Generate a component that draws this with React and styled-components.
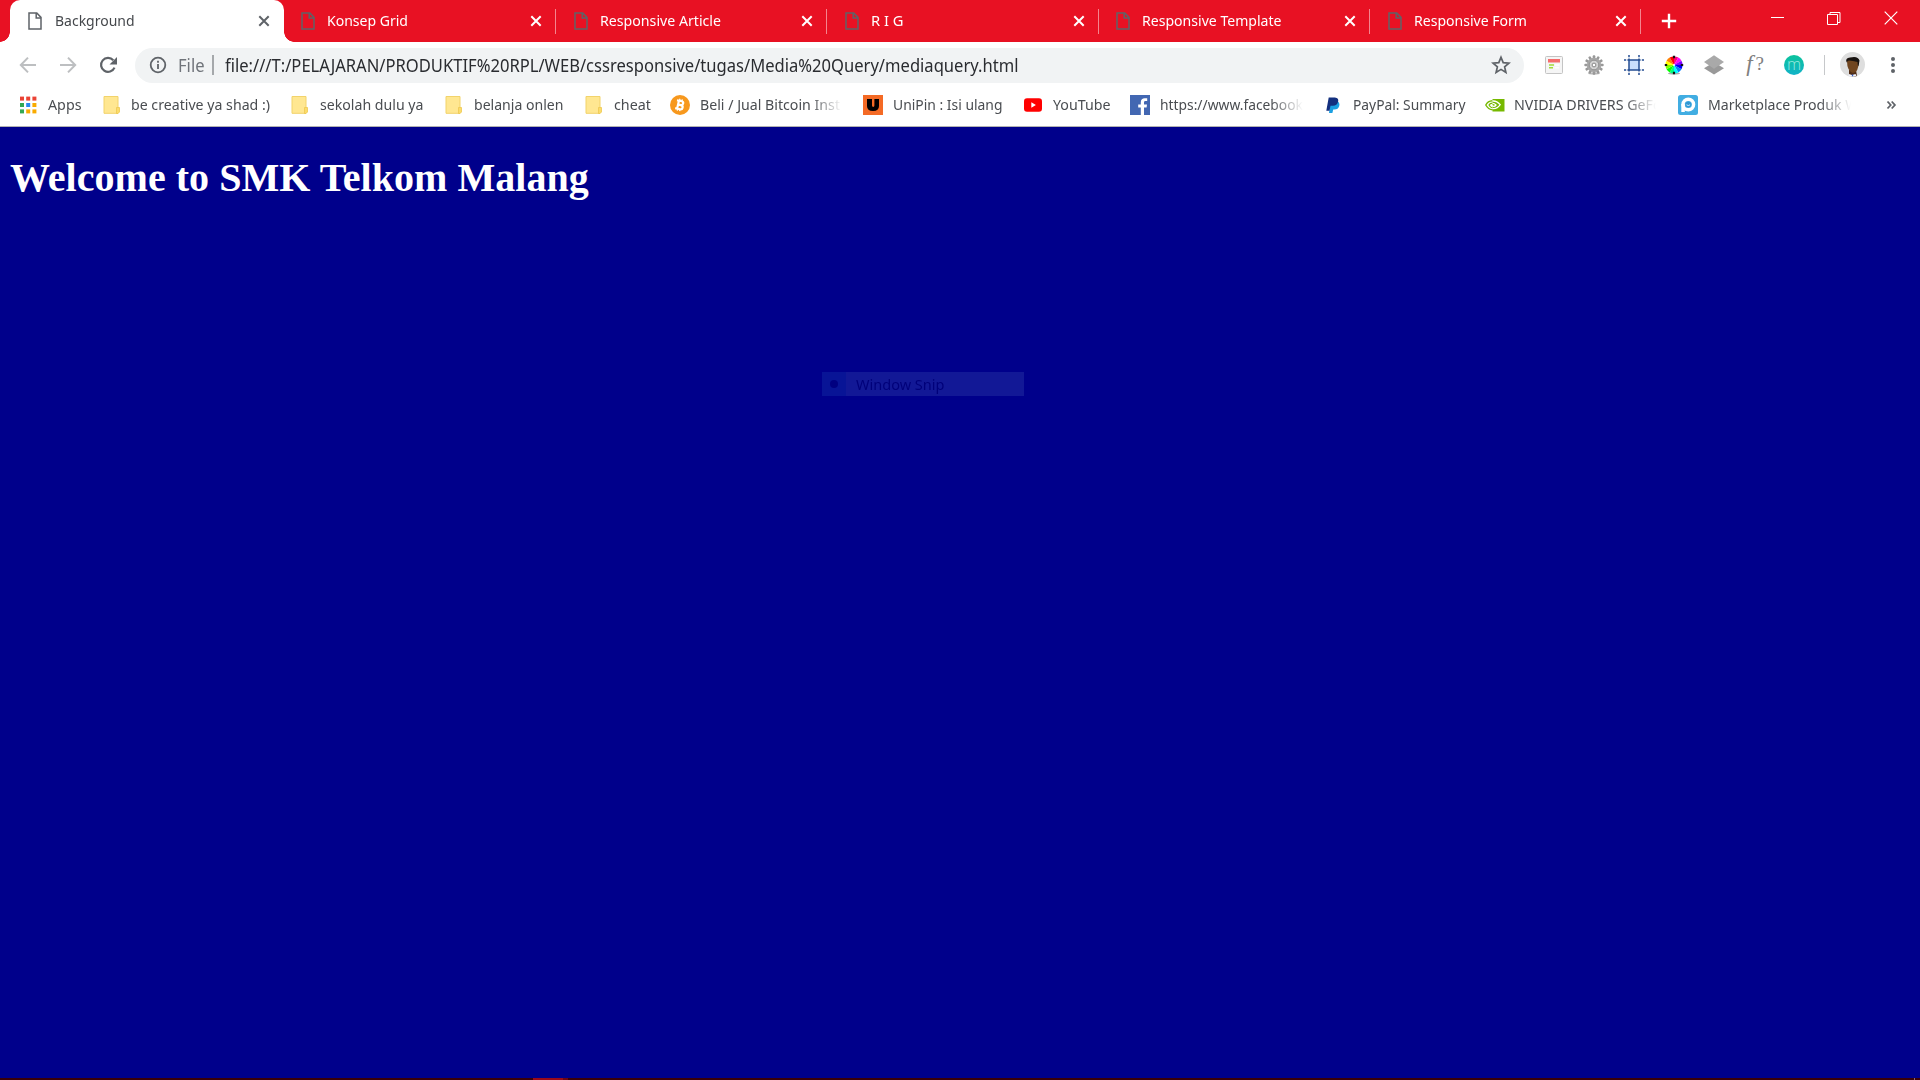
import React, { useLayoutEffect, useRef } from "react";
import styled, { createGlobalStyle } from "styled-components";

const Global = createGlobalStyle`
  html, body { margin: 0; padding: 0; background: #00008b; }
  body { overflow: hidden; font-family: "Noto Sans", "Open Sans", sans-serif; }
  * { box-sizing: border-box; }
`;

const Window = styled.div`
  width: 1920px; height: 1080px; display: flex; flex-direction: column; overflow: hidden;
`;

const FitBox = styled.span`
  display: block; flex: none; white-space: pre; line-height: ${p => p.$line || 20}px;
  font-size: ${p => p.$size || 15}px; color: ${p => p.$color || "inherit"};
  width: ${p => p.$box ? p.$box + "px" : "auto"};
  ${p => p.$fade && `mask-image: linear-gradient(to right, #000 calc(100% - 32px), transparent);`}
`;
const FitInner = styled.span`display: inline-block; transform-origin: 0 50%; vertical-align: top;`;

/* Condenses a label so that it takes the given width. */
function Fit({ text, width, tail = "", ...rest }) {
  const inner = useRef(null);
  const ref = useRef(null);
  useLayoutEffect(() => {
    inner.current.style.transform = "none";
    const natural = ref.current.getBoundingClientRect().width;
    inner.current.style.transform = `scaleX(${width / natural})`;
  }, [text, width]);
  return <FitBox {...rest}><FitInner ref={inner}><span ref={ref}>{text}</span>{tail}</FitInner></FitBox>;
}

/* ---------- tab strip ---------- */
const TabStrip = styled.div`
  height: 42px; flex: none; display: flex; background: #e81123; color: #fff; padding-left: 10px;
`;
const TabBox = styled.div`
  width: ${p => p.$w}px; flex: none; height: 42px; display: flex; align-items: center;
  position: relative; padding-left: ${p => p.$active ? 18 : 17.4}px;
  background: ${p => p.$active ? "#fff" : "transparent"};
  color: ${p => p.$active ? "#45484c" : "#fff"};
  border-radius: 10px 10px 0 0;
  ${p => p.$active && `
    &::before, &::after { content: ""; position: absolute; bottom: 0; width: 10px; height: 10px; }
    &::before { left: -10px; background: radial-gradient(circle at 0 0, transparent 9.5px, #fff 10px); }
    &::after { right: -10px; background: radial-gradient(circle at 100% 0, transparent 9.5px, #fff 10px); }
  `}
`;
const TabTitle = styled.div`flex: 1; padding-left: ${p => p.$active ? 12.5 : 12}px; padding-bottom: 3px;`;
const TabClose = styled.svg`width: 12px; height: 12px; margin-right: ${p => p.$r}px; flex: none;`;
const TabLine = styled.div`width: 1px; height: 25px; background: #f4858e; flex: none;`;
const NewTab = styled.svg`width: 16px; height: 16px; margin: 13px 0 0 19.5px; flex: none;`;
const Caption = styled.div`margin-left: auto; display: flex; padding: 11px 22px 0 0; gap: 43px;`;

const FilePath = () => (
  <svg width="14" height="18" viewBox="0 0 14 18" fill="none" stroke="#5f6368" strokeWidth="1.5">
    <path d="M1 1h7.8L13 5.4V17H1z" /><path d="M8.2 1v5H13" />
  </svg>
);

function Tab({ title, width, w, active }) {
  return (
    <TabBox $w={w} $active={active}>
      <FilePath />
      <TabTitle $active={active}><Fit text={title} width={width} /></TabTitle>
      <TabClose $r={active ? 14 : 13} viewBox="0 0 12 12" stroke={active ? "#5f6368" : "#fff"} strokeWidth="2">
        <path d="M1.3 1.3l9.4 9.4M10.7 1.3l-9.4 9.4" />
      </TabClose>
      {!active && <TabLine />}
    </TabBox>
  );
}

/* ---------- toolbar ---------- */
const Toolbar = styled.div`
  height: 45px; flex: none; background: #fff; display: flex; align-items: center; padding-left: 18px;
`;
const Nav = styled.div`display: flex; gap: 20px; width: 117px; height: 20px; flex: none;`;
const Omnibox = styled.div`
  width: 1389px; height: 35px; border-radius: 18px; background: #f1f3f4; flex: none;
  display: flex; align-items: center; padding: 0 13px 0; margin-top: 1px;
`;
const Scheme = styled.div`margin-left: 9.5px; width: 34px; flex: none; padding-bottom: 1px;`;
const Bar = styled.div`width: ${p => p.$w}px; height: 20px; background: ${p => p.$c}; flex: none;`;
const Url = styled.div`flex: 1; padding: 0 0 1px 11.3px;`;
const Extensions = styled.div`display: flex; gap: 20px; margin-left: 20px; width: 280px;`;
const Avatar = styled.svg`width: 25px; height: 25px; margin-left: 15px; flex: none;`;
const Menu = styled.svg`width: 6px; height: 18px; margin-left: 25px; flex: none;`;
const Glyph = styled.div`
  width: 20px; height: 20px; font: italic 23px/17px "Liberation Serif", serif;
  color: #808080; white-space: nowrap; display: flex; justify-content: flex-end; gap: 3px;
  & > b { font: normal 19px/18px "Liberation Serif", serif; }
`;
const Round = styled.div`
  width: 20px; height: 20px; border-radius: 50%; background: linear-gradient(#0cc39c, #12b2c8);
  color: #9be8e0; font: 300 16px/18px "Open Sans", sans-serif; text-align: center;
`;

const teeth = Array.from({ length: 12 }, (_, i) => i * 30);
const hues = Array.from({ length: 12 }, (_, i) => i);
const wedge = i => {
  const a = (i * 30 - 90) * Math.PI / 180, b = (i * 30 - 60) * Math.PI / 180;
  return `M10 10L${10 + 8.6 * Math.cos(a)} ${10 + 8.6 * Math.sin(a)}A8.6 8.6 0 0 1 ${10 + 8.6 * Math.cos(b)} ${10 + 8.6 * Math.sin(b)}z`;
};

const Icon = ({ children, ...p }) => <svg width="20" height="20" viewBox="0 0 20 20" fill="none" {...p}>{children}</svg>;

/* ---------- bookmarks ---------- */
const Bookmarks = styled.div`
  height: 40px; flex: none; background: #fff; border-bottom: 1px solid #b2b2b4;
  display: flex; align-items: center; padding: 0 0 3px 18px; color: #4a4d51;
`;
const Bookmark = styled.div`width: ${p => p.$w}px; flex: none; display: flex; align-items: center; gap: 10px;`;
const MarkLabel = styled.div`padding-bottom: 2px; margin-left: -.5px;`;

const Folder = () => (
  <Icon>
    <path d="M2 1.500h14v16.800H2z" fill="#ffe791" stroke="#f2d36b" />
    <path d="M14.500 12.500h3v4.500l-1.500 1.500h-1.500z" fill="#fbdc6c" stroke="#edc850" strokeWidth=".8" />
  </Icon>
);
const AppsIcon = () => {
  const c = ["#ea4335", "#ea4335", "#ea4335", "#34a853", "#2b88f0", "#f9ab00", "#34a853", "#f9ab00", "#f9ab00"];
  return <Icon>{c.map((f, i) => <rect key={i} x={2 + (i % 3) * 6.200} y={1.600 + Math.floor(i / 3) * 6.400} width="4" height="4" fill={f} />)}</Icon>;
};
const Bitcoin = () => (
  <Icon>
    <circle cx="10" cy="10" r="10" fill="#f7981d" />
    <g transform="rotate(13 10 10)" stroke="#fff" strokeWidth="2.200">
      <path d="M8 5.500v9M6 6h4.800a1.900 1.900 0 0 1 0 3.900H8M11 9.900a2.100 2.100 0 0 1 0 4.200H6" />
      <path d="M8.600 3.900v2M11 3.900v2M8.600 14v2M11 14v2" strokeWidth="1.300" />
    </g>
  </Icon>
);
const UniPin = () => (
  <Icon>
    <rect width="20" height="20" fill="#f46a25" />
    <path d="M4 4h5v6.600q0 1.400 1.200 1.400t1.200-1.400V4H16v7q0 5-6 5t-6-5z" fill="#000" />
  </Icon>
);
const YouTube = () => (
  <Icon><rect x="1" y="3.300" width="18" height="13.500" rx="3" fill="#f00" /><path d="M8.300 7.300l4.600 2.700-4.600 2.700z" fill="#fff" /></Icon>
);
const Facebook = () => (
  <Icon>
    <rect width="20" height="20" fill="#4267b2" />
    <path d="M10.800 20v-7.600H8.200V9.400h2.600V7.200c0-2.700 1.600-4 4-4 1.100 0 2.100.1 2.400.1v2.700h-1.600c-1.300 0-1.600.6-1.600 1.600v1.800h3l-.4 3h-2.600V20z" fill="#fff" />
  </Icon>
);
const PayPal = () => (
  <Icon>
    <path d="M7.500 6.500h7.200q2.400 1.500 1.500 4.500-.9 3.500-5 3.500h-1l-.8 3.500H6z" fill="#1ba0e2" />
    <path d="M5.700 2.500h6.200q4.200.3 3.200 4.300-1 4-5.300 4H7.500l-1 5H3.300z" fill="#13307f" />
  </Icon>
);
const Nvidia = () => (
  <Icon>
    <path d="M7.500 4H19.500v12.500h-12z" fill="#76b900" />
    <path d="M7.500 5.800C4.500 6 1.800 8 .8 10c1.600 3 4.300 4.600 6.900 4.800" stroke="#76b900" strokeWidth="1.400" />
    <path d="M7.500 6c4-.3 6.500 2.200 7.700 3.600-1.700 2.500-4 4-6.500 4-2.400 0-4-1.700-4.500-3.500C5.800 8.300 8.600 7.600 11 10c-1.400 1.800-2.600 1.800-4 .6" stroke="#fff" strokeWidth="1.300" />
    <path d="M7.500 8.200C5.700 8.300 4.500 9 4 10c.8 1.700 2 2.700 3.500 3" stroke="#76b900" strokeWidth="1.200" />
  </Icon>
);
const Market = () => (
  <Icon>
    <rect width="20" height="20" rx="2.500" fill="#41ade2" />
    <circle cx="10.300" cy="9.500" r="5.300" stroke="#fff" strokeWidth="3.400" />
    <path d="M3.300 9h3.500v8H3.300z" fill="#fff" /><circle cx="10.300" cy="9.500" r="2.800" fill="#2f96d3" />
    <path d="M8.500 9.800q1.800 1.500 3.600 0" stroke="#fff" strokeWidth=".8" />
  </Icon>
);

const marks = [
  { icon: <AppsIcon />, text: "Apps", width: 33.5, w: 83.5 },
  { icon: <Folder />, text: "be creative ya shad :)", width: 139, w: 188.5 },
  { icon: <Folder />, text: "sekolah dulu ya", width: 103.5, w: 154 },
  { icon: <Folder />, text: "belanja onlen", width: 89.5, w: 140 },
  { icon: <Folder />, text: "cheat", width: 37, w: 86 },
  { icon: <Bitcoin />, text: "Beli / Jual Bitcoin Inst", width: 140, w: 193, box: 142, fade: true },
  { icon: <UniPin />, text: "UniPin : Isi ulang", width: 109.5, w: 160 },
  { icon: <YouTube />, text: "YouTube", width: 57.5, w: 107 },
  { icon: <Facebook />, text: "https://www.facebook", width: 143, w: 193, box: 143, fade: true },
  { icon: <PayPal />, text: "PayPal: Summary", width: 112.5, w: 161.5 },
  { icon: <Nvidia />, text: "NVIDIA DRIVERS GeF", tail: "o", width: 139, w: 193.5, box: 142, fade: true },
  { icon: <Market />, text: "Marketplace Produk", tail: " W", width: 133.5, w: 207.5, box: 143, fade: true },
];

/* ---------- page ---------- */
const Page = styled.main`
  flex: 1; background: #00008b; position: relative; padding: 0 10px; min-height: 0;
`;
const Title = styled.h1`
  margin: 0; padding-top: 28px; color: #fff; letter-spacing: .035px;
  font: bold 40px/46px "Liberation Serif", "Times New Roman", serif;
`;
const Snip = styled.div`
  position: absolute; left: 822px; top: 245px; width: 202px; height: 24px;
  display: flex; align-items: center; background: #121896; color: #00007a;
`;
const SnipMark = styled.div`
  width: 24px; height: 24px; background: #081496; display: flex; align-items: center; justify-content: center; margin-right: 9.5px;
  &::after { content: ""; width: 8px; height: 8px; border-radius: 50%; background: #000080; }
`;
const Taskbar = styled.div`
  height: 2px; flex: none; display: flex; background: #3a0008;
`;
const TaskActive = styled.div`margin-left: 533px; width: 30px; background: #9a0a1a;`;
const TaskEdge = styled.div`width: 5px; background: #6a0616;`;
const DesktopEdge = styled.div`width: 1px; margin: 0 5px 0 auto; background: #8a6a6e;`;

export default function App() {
  return (
    <Window>
      <Global />
      <TabStrip>
        <Tab active title="Background" width={79.5} w={274} />
        <Tab title="Konsep Grid" width={81} w={272.3} />
        <Tab title="Responsive Article" width={121} w={271.2} />
        <Tab title="R I G" width={32.5} w={271.6} />
        <Tab title="Responsive Template" width={139.5} w={271.3} />
        <Tab title="Responsive Form" width={113} w={270.9} />
        <NewTab viewBox="0 0 16 16" stroke="#fff" strokeWidth="2.400"><path d="M8 .8v14.400M.8 8h14.400" /></NewTab>
        <Caption>
          <svg width="14" height="14" stroke="#fff"><path d="M1 6.500h13" /></svg>
          <svg width="14" height="14" fill="none" stroke="#fff"><path d="M.5 3.500h10v10H.5zM3 3.500V1.500h10v10h-2.500" /></svg>
          <svg width="14" height="14" stroke="#fff" strokeWidth="1.200"><path d="M.7.700l12.600 12.600M13.300.700L.7 13.300" /></svg>
        </Caption>
      </TabStrip>

      <Toolbar>
        <Nav>
          <Icon stroke="#bdbfc1" strokeWidth="2"><path d="M18 10H3.500M10 2.600L2.800 10l7.200 7.400" /></Icon>
          <Icon stroke="#bdbfc1" strokeWidth="2"><path d="M2 10h14.500M10 2.600l7.200 7.400-7.200 7.400" /></Icon>
          <Icon><path d="M16.500 12.600a7 7 0 1 1-1.200-7.400" stroke="#5f6368" strokeWidth="2.200" /><path d="M19 2v7.500h-7.500z" fill="#5f6368" /></Icon>
        </Nav>
        <Omnibox>
          <Icon stroke="#5f6368" strokeWidth="1.800"><circle cx="10" cy="10" r="7.300" /><path d="M10 9v5M10 5.800v1.900" /></Icon>
          <Scheme><Fit text="File" width={26.5} $size={17.5} $line={24} $color="#70747a" /></Scheme>
          <Bar $w={2} $c="#a5a8ab" />
          <Url><Fit text="file:///T:/PELAJARAN/PRODUKTIF%20RPL/WEB/cssresponsive/tugas/Media%20Query/mediaquery.html" width={793.5} $size={17.5} $line={24} $color="#2a2c30" /></Url>
          <Icon stroke="#5f6368" strokeWidth="1.700"><path d="M10 2.300l2.200 5.300 5.700.5-4.300 3.700 1.300 5.600-4.900-3-4.900 3 1.300-5.600L2.100 8.100l5.700-.5z" /></Icon>
        </Omnibox>
        <Extensions>
          <Icon>
            <rect x="1.500" y="1.500" width="17" height="17" rx="1" fill="#f5f5f5" stroke="#c4c4c4" />
            <path d="M4 4h12v3.500H4z" fill="#f56c6c" /><path d="M5 10h5M5 12.800h4" stroke="#a4dc3c" strokeWidth="1.600" /><path d="M11 10h4.500M10.500 12.800H15" stroke="#fff" strokeWidth="1.500" />
          </Icon>
          <Icon>
            <ellipse cx="10" cy="18.500" rx="6" ry="1.200" fill="#bbb" />
            {teeth.map(t => <rect key={t} x="8.700" y=".3" width="2.600" height="5" rx="1" fill="#989898" transform={`rotate(${t} 10 10)`} />)}
            <circle cx="10" cy="10" r="7.200" fill="#a6a6a6" /><circle cx="10" cy="10" r="4.800" fill="#d2d2d2" stroke="#929292" />
            <circle cx="10" cy="10" r="1.900" fill="#fff" stroke="#858585" />
          </Icon>
          <Icon stroke="#254d92">
            <rect x="5" y="5" width="10" height="10" fill="#c9defc" stroke="none" />
            <path d="M5 3.400v13.200M15 3.400v13.200M3.400 5h13.200M3.400 15h13.200" strokeWidth="1.500" />
            <path d="M0 5h2.200M17.800 5H20M0 15h2.200M17.800 15H20M5 0v2.200M5 17.800V20M15 0v2.200M15 17.800V20" strokeWidth="1.500" />
          </Icon>
          <Icon>
            <ellipse cx="10" cy="18.500" rx="6" ry="1" fill="#aaa" />
            {hues.map(i => <path key={i} d={wedge(i)} fill={`hsl(${(390 - (i + 2) * 30) % 360} 100% 50%)`} />)}
            <path d="M10 .8v2.400M10 16.800v2.400M.8 10h2.400M16.800 10h2.400" stroke="#111" strokeWidth="2.200" /><circle cx="10" cy="10" r="1" fill="#fff" />
          </Icon>
          <Icon>
            <path d="M0 13.200l10-6 10 6-10 6.300z" fill="#999" /><path d="M0 7l10-6.800L20 7l-10 6.800z" fill="#a9a9a9" />
          </Icon>
          <Glyph>f<b>?</b></Glyph>
          <Round>m</Round>
        </Extensions>
        <Bar $w={1} $c="#c6c8ca" />
        <Avatar viewBox="0 0 25 25">
          <circle cx="12.500" cy="12.500" r="12.500" fill="#dedede" />
          <path d="M9 18h7l1 6q-4 1.500-8-.5z" fill="#4f2c16" />
          <path d="M7 9q0-3 5.500-3T18.500 10q0 11-5.500 11-6-2-6-12z" fill="#70451f" />
          <path d="M6.500 10Q5 6 10 5.500q8-2 9.500 3l-1 6q-1-1-1-4.500-5-1.500-8.500-1.500-2 0-2 2z" fill="#18120f" />
          <path d="M9 22l3 1 3.500-1 1 2q-3 1.500-8 0z" fill="#f1f3fa" /><path d="M11.500 22.500l2 .2-1 2z" fill="#2552c8" />
        </Avatar>
        <Menu viewBox="0 0 6 18" fill="#5f6368"><circle cx="3" cy="3" r="2" /><circle cx="3" cy="9" r="2" /><circle cx="3" cy="15" r="2" /></Menu>
      </Toolbar>

      <Bookmarks>
        {marks.map(m => (
          <Bookmark key={m.text} $w={m.w}>
            {m.icon}
            <MarkLabel><Fit text={m.text} tail={m.tail} width={m.width} $box={m.box} $fade={m.fade} /></MarkLabel>
          </Bookmark>
        ))}
        <svg width="11" height="10" fill="none" stroke="#5f6368" strokeWidth="1.800"><path d="M1.500 1.500L4.700 5 1.500 8.500M5.700 1.500L8.900 5 5.700 8.500" /></svg>
      </Bookmarks>

      <Page>
        <Title>Welcome to SMK Telkom Malang</Title>
        <Snip><SnipMark /><Fit text="Window Snip" width={88.5} /></Snip>
      </Page>
      <Taskbar><TaskActive /><TaskEdge /><DesktopEdge /></Taskbar>
    </Window>
  );
}
